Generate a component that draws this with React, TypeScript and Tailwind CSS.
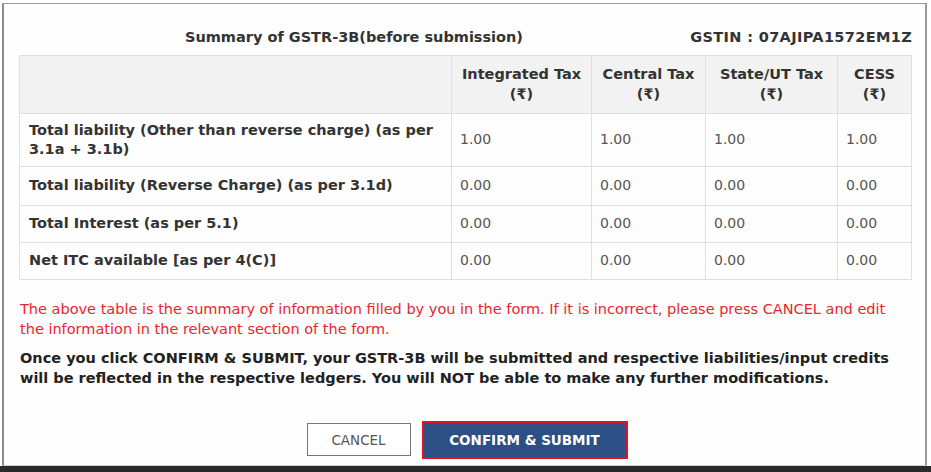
const rows = [
  { label: "Total liability (Other than reverse charge) (as per 3.1a + 3.1b)", v: "1.00", h: "h-[53px]" },
  { label: "Total liability (Reverse Charge) (as per 3.1d)", v: "0.00", h: "h-[39px]" },
  { label: "Total Interest (as per 5.1)", v: "0.00", h: "h-[37px]" },
  { label: "Net ITC available [as per 4(C)]", v: "0.00", h: "h-[37px]" },
];

const heads = [
  { t: "Integrated Tax", w: "w-[140px]" },
  { t: "Central Tax", w: "w-[114px]" },
  { t: "State/UT Tax", w: "w-[132px]" },
  { t: "CESS", w: "w-[74px]" },
];

const verdana = "font-['DejaVu_Sans',Verdana,sans-serif]";

export default function App() {
  return (
    <div className="w-[931px] h-[472px] bg-white overflow-hidden flex flex-col">
      <div className="flex-1 flex">
        <div className={`ml-[2px] mt-[3px] w-[925px] border-l-2 border-t border-r-2 border-b border-l-[#8a8a8a] border-t-[#9a9a9a] border-r-[#9a9a9a] border-b-[#d0d0d0] bg-[#fdfefd] flex flex-col ${verdana}`}>
          <div className="flex items-center justify-between pt-[23px] pl-[181px] pr-[13px] text-[14.5px] font-bold text-[#333]">
            <span>Summary of GSTR-3B(before submission)</span>
            <span className="tracking-[0.35px]">GSTIN : 07AJIPA1572EM1Z</span>
          </div>
          <table className="ml-[15px] mt-[6px] w-[893px] border-collapse">
            <thead>
              <tr className="h-[58px] bg-[#f2f2f2]">
                <th className="border border-[#dfdfdf]" />
                {heads.map((h) => (
                  <th key={h.t} className={`${h.w} border border-[#dfdfdf] text-[14.5px] font-bold text-[#333] leading-[20px] align-middle`}>
                    {h.t}
                    <br />
                    (₹)
                  </th>
                ))}
              </tr>
            </thead>
            <tbody>
              {rows.map((r) => (
                <tr key={r.label} className={r.h}>
                  <td className="border border-[#dfdfdf] pl-[9px] pr-[10px] text-[14.5px] font-bold text-[#333] leading-[19px]">{r.label}</td>
                  {heads.map((h) => (
                    <td key={h.t} className="border border-[#dfdfdf] pl-[8px] text-[14px] text-[#555]">
                      {r.v}
                    </td>
                  ))}
                </tr>
              ))}
            </tbody>
          </table>
          <div className="ml-[16px] mt-[19px] w-[880px] text-[14.5px] leading-[20px] text-[#e8262d]">
            The above table is the summary of information filled by you in the form. If it is incorrect, please press CANCEL and edit the information in the relevant section of the form.
          </div>
          <div className="ml-[16px] mt-[9px] w-[880px] text-[14.5px] font-bold leading-[20px] text-[#222]">
            Once you click CONFIRM &amp; SUBMIT, your GSTR-3B will be submitted and respective liabilities/input credits will be reflected in the respective ledgers. You will NOT be able to make any further modifications.
          </div>
          <div className="mt-[33px] flex justify-center items-center gap-[11px] pl-[5px] text-[13.5px]">
            <button className="w-[104px] h-[33px] border border-[#777] bg-white text-[#555]">CANCEL</button>
            <button className="w-[206px] h-[38px] border-2 border-[#e0141e] bg-[#2c4f86] text-white font-semibold">CONFIRM &amp; SUBMIT</button>
          </div>
        </div>
      </div>
      <div className="h-[6px] bg-[#2a2a2a]" />
    </div>
  );
}
